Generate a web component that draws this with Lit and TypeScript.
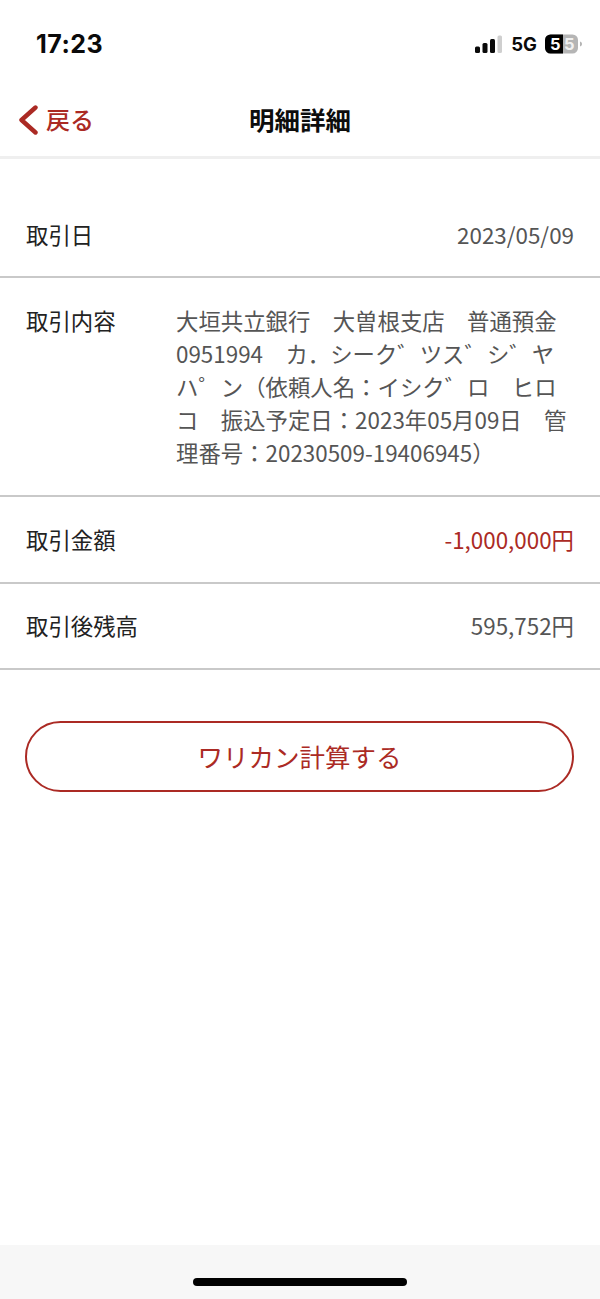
import { LitElement, html, css, svg } from "lit";
import { customElement } from "lit/decorators.js";

const rows = [
  { label: "取引日", value: "2023/05/09", cls: "end first" },
  {
    label: "取引内容",
    value:
      "大垣共立銀行　大曽根支店　普通預金0951994　カ．シーク゛ツス゛シ゛ヤハ゜ン（依頼人名：イシク゛ロ　ヒロコ　振込予定日：2023年05月09日　管理番号：20230509-19406945）",
    cls: "long",
  },
  { label: "取引金額", value: "-1,000,000円", cls: "end red" },
  { label: "取引後残高", value: "595,752円", cls: "end" },
];

@customElement("app-root")
export class AppRoot extends LitElement {
  static styles = css`
    :host {
      display: flex;
      flex-direction: column;
      width: 600px;
      height: 1299px;
      background: #fff;
      font-family: "Noto Sans CJK JP", "Noto Sans", sans-serif;
      text-spacing-trim: space-all;
      overflow: hidden;
    }
    .status {
      height: 88px;
      display: flex;
      justify-content: space-between;
      align-items: center;
      padding: 0 17px 0 36px;
      box-sizing: border-box;
    }
    .time {
      font: 700 25px "Inter", "Liberation Sans", sans-serif;
      color: #0a0a0a;
      letter-spacing: 0.5px;
    }
    .status-right {
      display: flex;
      align-items: center;
      gap: 9px;
    }
    .net {
      font: 700 18.5px "Inter", "Liberation Sans", sans-serif;
      color: #0a0a0a;
      margin-right: -1px;
    }
    .nav {
      height: 71px;
      display: grid;
      grid-template-columns: 1fr auto 1fr;
      align-items: center;
      padding: 0 18px 7px;
      box-sizing: border-box;
      border-bottom: 3px solid #efefef;
    }
    .back {
      display: flex;
      align-items: center;
      gap: 6px;
      color: #ab2a24;
      font-size: 24px;
      font-weight: 500;
      line-height: 32px;
    }
    .title {
      font-size: 25.5px;
      font-weight: 700;
      color: #0d0d0d;
      line-height: 32px;
    }
    .list {
      padding-top: 34px;
    }
    .row {
      display: flex;
      justify-content: space-between;
      border-bottom: 2px solid #c9c9c9;
      padding: 0 26px;
      font-size: 22.4px;
      line-height: 33px;
      color: #555;
      height: 86.5px;
      box-sizing: border-box;
      align-items: center;
    }
    .row.first {
      height: 85px;
    }
    .row.long {
      height: 219px;
      align-items: flex-start;
      padding-top: 26px;
    }
    .label {
      color: #222;
      flex: none;
    }
    .long .label {
      width: 150px;
    }
    .long .value {
      flex: 1;
    }
    .red .value {
      color: #ab2a24;
    }
    .action {
      padding: 51px 26px 0 25px;
    }
    .btn {
      height: 71px;
      box-sizing: border-box;
      border: 2px solid #ab2a24;
      border-radius: 36px;
      display: flex;
      align-items: center;
      justify-content: center;
      color: #ab2a24;
      font-size: 25.5px;
      padding-bottom: 2px;
    }
    .spacer {
      flex: 1;
    }
    .home {
      height: 54px;
      background: #f7f7f7;
      display: flex;
      justify-content: center;
      padding-top: 33px;
      box-sizing: border-box;
    }
    .home i {
      display: block;
      width: 214px;
      height: 8px;
      border-radius: 4px;
      background: #000;
    }
  `;

  private signal() {
    return html`<svg width="27" height="20" viewBox="0 0 27 20">
      <rect x="0" y="12.5" width="5" height="6.5" rx="1.5" fill="#0a0a0a"></rect>
      <rect x="7.5" y="9" width="5" height="10" rx="1.5" fill="#0a0a0a"></rect>
      <rect x="15" y="5" width="5" height="14" rx="1.5" fill="#0a0a0a"></rect>
      <rect x="22.5" y="1.5" width="4.5" height="17.5" rx="1.5" fill="#cfcfcf"></rect>
    </svg>`;
  }

  private batteryIcon() {
    return svg`<svg width="38" height="20" viewBox="0 0 38 20">
      <rect x="0" y="0.5" width="33" height="19" rx="5.5" fill="#b5b5b5"></rect>
      <path d="M5.5 .5H18V19.5H5.5a5.5 5.5 0 0 1-5.5-5.5V6a5.5 5.5 0 0 1 5.5-5.5Z" fill="#000"></path>
      <path d="M35 7.5c1.5.5 2 1.5 2 2.5s-.5 2-2 2.5Z" fill="#b5b5b5"></path>
      <text x="5" y="16" font-family="Inter, Liberation Sans, sans-serif" font-size="16.5" font-weight="700" fill="#fff">5</text>
      <text x="19" y="16" font-family="Inter, Liberation Sans, sans-serif" font-size="16.5" font-weight="700" fill="#f1f1f1">5</text>
    </svg>`;
  }

  render() {
    return html`
      <div class="status">
        <span class="time">17:23</span>
        <span class="status-right">${this.signal()}<span class="net">5G</span>${this.batteryIcon()}</span>
      </div>
      <div class="nav">
        <div class="back">
          <svg width="22" height="32" viewBox="0 0 22 32" fill="none">
            <path d="M17.5 4.500 L3.500 17 L17.500 29.500" stroke="#ab2a24" stroke-width="4.400" stroke-linecap="round" stroke-linejoin="round"></path>
          </svg>
          <span>戻る</span>
        </div>
        <div class="title">明細詳細</div>
        <div></div>
      </div>
      <div class="list">
        ${rows.map(
          (r) => html`<div class="row ${r.cls}">
            <span class="label">${r.label}</span>
            <span class="value">${r.value}</span>
          </div>`,
        )}
      </div>
      <div class="action"><div class="btn">ワリカン計算する</div></div>
      <div class="spacer"></div>
      <div class="home"><i></i></div>
    `;
  }
}
